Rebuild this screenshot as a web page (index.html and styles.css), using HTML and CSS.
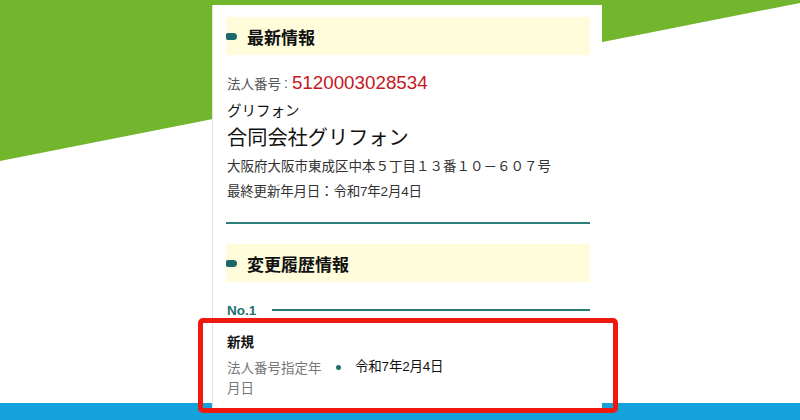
FILE: index.html
```html
<!DOCTYPE html>
<html lang="ja">
<head>
<meta charset="utf-8">
<link rel="stylesheet" href="styles.css">
</head>
<body>
<div class="bg-green"></div>
<div class="bg-blue"></div>
<div class="page">
  <div class="card">
    <div class="heading"><span class="marker"></span><span class="heading-text">最新情報</span></div>
    <div class="number-row"><span class="label">法人番号</span><span class="colon">:</span><span class="number">5120003028534</span></div>
    <div class="kana">グリフォン</div>
    <div class="name">合同会社グリフォン</div>
    <div class="address">大阪府大阪市東成区中本５丁目１３番１０－６０７号</div>
    <div class="updated">最終更新年月日：令和7年2月4日</div>
    <div class="rule"></div>
    <div class="heading heading2"><span class="marker"></span><span class="heading-text">変更履歴情報</span></div>
    <div class="no-row"><span class="no">No.1</span><span class="no-line"></span></div>
    <div class="kind">新規</div>
    <div class="def-row">
      <div class="def-label">法人番号指定年月日</div>
      <span class="dot"></span>
      <div class="def-value">令和7年2月4日</div>
    </div>
  </div>
</div>
<div class="highlight"></div>
</body>
</html>
```

FILE: styles.css
```css
html, body {
  margin: 0;
  padding: 0;
}
body {
  width: 800px;
  height: 420px;
  overflow: hidden;
  position: relative;
  background: #ffffff;
  font-family: "Liberation Sans", "Noto Sans CJK JP", sans-serif;
  color: #222;
}
.bg-green {
  position: absolute;
  left: 0;
  top: 0;
  width: 800px;
  height: 170px;
  background: #72b62d;
  clip-path: polygon(0 0, 800px 0, 800px 3px, 0 161px);
}
.bg-blue {
  position: absolute;
  left: 0;
  top: 403px;
  width: 800px;
  height: 17px;
  background: #14a1dc;
}
.page {
  position: relative;
  padding: 5px 0 0 212px;
}
.card {
  box-sizing: border-box;
  width: 390px;
  height: 407px;
  background: #fff;
  border-left: 1px solid #e3e3e3;
  padding: 12px 12px 0 13px;
  display: flex;
  flex-direction: column;
}
.heading {
  height: 38px;
  background: #fefcdb;
  display: flex;
  align-items: center;
}
.marker {
  width: 11px;
  height: 7px;
  border-radius: 2px 4px 4px 2px;
  background: #1b6a68;
}
.heading-text {
  margin-left: 10px;
  font-size: 17px;
  font-weight: bold;
  color: #111;
  font-family: "Noto Sans CJK JP", sans-serif;
}
.number-row {
  margin-top: 16px;
  height: 24px;
  display: flex;
  align-items: center;
  padding-left: 1px;
}
.label {
  font-size: 13.5px;
  color: #555;
  font-family: "Noto Sans CJK JP", sans-serif;
}
.colon {
  font-size: 14px;
  color: #555;
  margin-left: 3px;
}
.number {
  font-size: 18.8px;
  color: #c8161e;
  margin-left: 4px;
}
.kana {
  margin-top: 4px;
  height: 22px;
  line-height: 22px;
  font-size: 14.5px;
  color: #111;
  padding-left: 1px;
  font-family: "Noto Sans CJK JP", sans-serif;
}
.name {
  margin-top: 2px;
  height: 28px;
  line-height: 28px;
  font-size: 20.2px;
  color: #111;
  padding-left: 1px;
  font-family: "Noto Sans CJK JP", sans-serif;
}
.address {
  margin-top: 3px;
  height: 22px;
  line-height: 22px;
  font-size: 13.5px;
  color: #333;
  padding-left: 1px;
  font-family: "Noto Sans CJK JP", sans-serif;
}
.updated {
  margin-top: 5px;
  height: 22px;
  line-height: 22px;
  font-size: 13.5px;
  color: #333;
  padding-left: 1px;
  letter-spacing: -0.2px;
}
.rule {
  margin-top: 19px;
  height: 2px;
  background: #2e7e7b;
}
.heading2 {
  margin-top: 20px;
}
.no-row {
  margin-top: 18px;
  height: 20px;
  display: flex;
  align-items: center;
  padding-left: 1px;
}
.no {
  font-size: 13.5px;
  font-weight: bold;
  color: #1f6f6c;
}
.no-line {
  flex: 1;
  height: 2px;
  background: #2b7b78;
  margin-left: 16px;
}
.kind {
  margin-top: 11px;
  height: 20px;
  line-height: 20px;
  font-size: 13.5px;
  font-weight: bold;
  color: #111;
  padding-left: 1px;
  font-family: "Noto Sans CJK JP", sans-serif;
}
.def-row {
  margin-top: 6px;
  display: flex;
  align-items: flex-start;
  padding-left: 1px;
}
.def-label {
  width: 100px;
  font-size: 13.5px;
  line-height: 20px;
  color: #777;
  font-family: "Noto Sans CJK JP", sans-serif;
}
.dot {
  width: 5px;
  height: 5px;
  border-radius: 50%;
  background: #1f6f6c;
  margin: 8px 0 0 9px;
}
.def-value {
  margin-left: 14px;
  font-size: 13.5px;
  line-height: 20px;
  color: #111;
  letter-spacing: -0.2px;
}
.highlight {
  position: absolute;
  left: 198px;
  top: 318px;
  width: 410px;
  height: 85px;
  border: 5px solid #ee1a10;
  border-radius: 5px;
}
```
